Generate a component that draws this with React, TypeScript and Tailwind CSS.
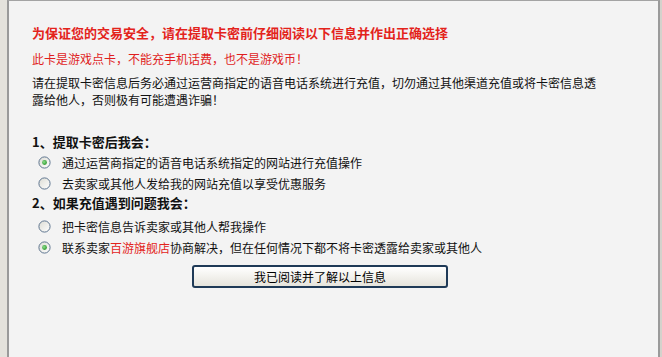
import React, { useState } from 'react';

const font = { fontFamily: '"Noto Sans CJK SC", "Liberation Sans", sans-serif' };

const Radio: React.FC<{ checked: boolean }> = ({ checked }) => (
  <svg width="13" height="13" viewBox="0 0 13 13" className="shrink-0">
    <defs>
      <linearGradient id="rbg" x1="0" y1="0" x2="1" y2="1">
        <stop offset="0" stopColor="#dcdcd4" />
        <stop offset="1" stopColor="#ffffff" />
      </linearGradient>
      <radialGradient id="dot" cx="0.4" cy="0.4" r="0.6">
        <stop offset="0" stopColor="#8ee08e" />
        <stop offset="1" stopColor="#2f9a2f" />
      </radialGradient>
    </defs>
    <circle cx="6.5" cy="6.5" r="5.6" fill="url(#rbg)" stroke="#5f7690" strokeWidth="1" />
    {checked && <circle cx="6.5" cy="6.5" r="2.4" fill="url(#dot)" />}
  </svg>
);

const Option: React.FC<{ checked: boolean; children: React.ReactNode }> = ({ checked, children }) => (
  <div className="flex h-[21px] items-center pl-[6px]">
    <Radio checked={checked} />
    <span className="ml-[11px] text-[12px] leading-[21px] text-[#111]">{children}</span>
  </div>
);

export default function App() {
  const [read, setRead] = useState(false);

  return (
    <div className="flex h-[357px] w-[662px] overflow-hidden bg-[#e6e4de]" style={font}>
      {/* page behind the dialog */}
      <div className="w-[7px] shrink-0 bg-[#e4e2dc]" />

      {/* dialog panel */}
      <div className="flex-1 border-x-2 border-t border-x-[#9a9a9a] border-t-[#a3a3a3] bg-[#f3f3f3] pl-[23px] pt-[23px]">
        <p className="text-[13px] font-bold leading-[18px] text-[#e3231b]">
          为保证您的交易安全，请在提取卡密前仔细阅读以下信息并作出正确选择
        </p>
        <p className="mt-[8px] text-[12px] leading-[18px] text-[#e01e1e]">
          此卡是游戏点卡，不能充手机话费，也不是游戏币！
        </p>
        <p className="mt-[6px] w-[568px] text-[12px] leading-[17px] text-[#111]">
          请在提取卡密信息后务必通过运营商指定的语音电话系统进行充值，切勿通过其他渠道充值或将卡密信息透露给他人，否则极有可能遭遇诈骗！
        </p>

        <h3 className="mt-[24px] h-[20px] text-[13px] font-bold leading-[20px] text-[#111]">1、提取卡密后我会：</h3>
        <Option checked>通过运营商指定的语音电话系统指定的网站进行充值操作</Option>
        <Option checked={false}>去卖家或其他人发给我的网站充值以享受优惠服务</Option>

        <h3 className="h-[22px] pb-[4px] text-[13px] font-bold leading-[18px] text-[#111]">2、如果充值遇到问题我会：</h3>
        <Option checked={false}>把卡密信息告诉卖家或其他人帮我操作</Option>
        <Option checked>
          联系卖家<span className="text-[#e3231b]">百游旗舰店</span>协商解决，但在任何情况下都不将卡密透露给卖家或其他人
        </Option>

        <button
          onClick={() => setRead(!read)}
          className="ml-[160px] mt-[7px] flex h-[23px] w-[256px] items-center justify-center rounded-[3px] border-2 border-[#1f3a57] bg-gradient-to-b from-white to-[#e6e4dc] text-[12px] leading-none text-black"
        >
          我已阅读并了解以上信息
        </button>
      </div>

      <div className="w-[2px] shrink-0 bg-[#d4d2cc]" />
    </div>
  );
}
